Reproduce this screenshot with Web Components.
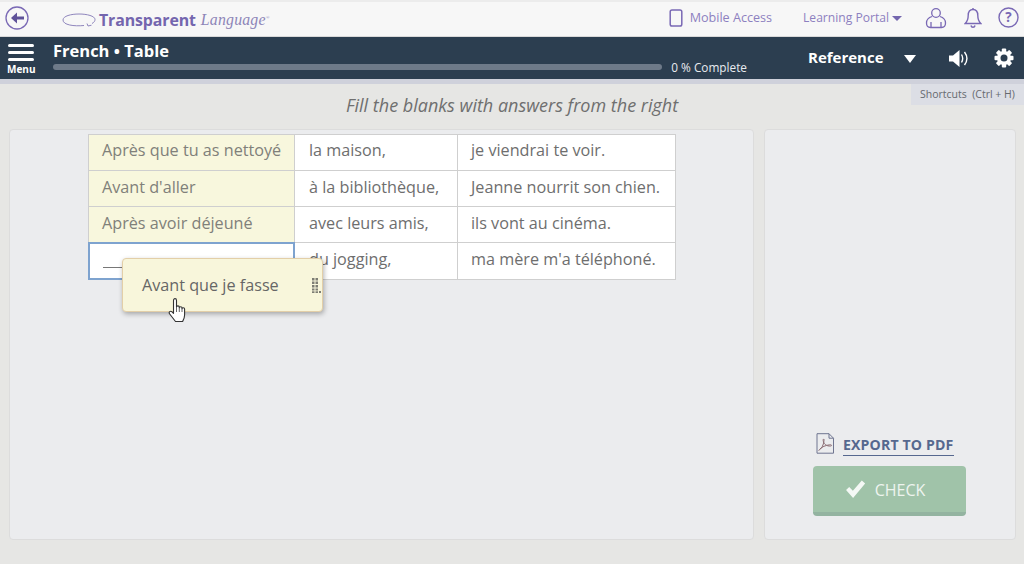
<!DOCTYPE html>
<html lang="fr"><head><meta charset="utf-8"><title>French Table</title>
<style>
html,body{margin:0;padding:0;height:564px;overflow:hidden}
body{background:#e6e6e4;font-family:"Open Sans",sans-serif;color:#6a6a6a;display:flex;flex-direction:column;position:relative}
</style></head><body>
<tl-topbar></tl-topbar>
<tl-navbar title="French • Table"></tl-navbar>
<tl-shortcuts>Shortcuts&nbsp; (Ctrl + H)</tl-shortcuts>
<tl-heading>Fill the blanks with answers from the right</tl-heading>
<tl-workspace>
  <tl-exercise slot="main">
    <tl-row first><tl-cell kind="answer">Après que tu as nettoyé</tl-cell><tl-cell>la maison,</tl-cell><tl-cell>je viendrai te voir.</tl-cell></tl-row>
    <tl-row><tl-cell kind="answer">Avant d'aller</tl-cell><tl-cell>à la bibliothèque,</tl-cell><tl-cell>Jeanne nourrit son chien.</tl-cell></tl-row>
    <tl-row><tl-cell kind="answer">Après avoir déjeuné</tl-cell><tl-cell>avec leurs amis,</tl-cell><tl-cell>ils vont au cinéma.</tl-cell></tl-row>
    <tl-row last><tl-cell kind="blank"></tl-cell><tl-cell>du jogging,</tl-cell><tl-cell>ma mère m'a téléphoné.</tl-cell></tl-row>
    <tl-drag-chip>Avant que je fasse</tl-drag-chip>
  </tl-exercise>
  <tl-actions slot="side"></tl-actions>
</tl-workspace>
<script>
function def(name,html,init){
  customElements.define(name,class extends HTMLElement{
    constructor(){super();const s=this.attachShadow({mode:'open'});s.innerHTML=typeof html==='function'?html(this):html;}
    connectedCallback(){if(init)init(this);}
  });
}
const P='#7a69b5';
def('tl-topbar',`<style>
:host{display:flex;align-items:center;box-sizing:border-box;height:37px;background:#f7f7f7;border-top:2px solid #ececec;border-bottom:1px solid #d9d9d9;padding-bottom:3px;font:12.1px "Open Sans",sans-serif;color:#8d80c0;flex:none}
svg{display:block;flex:none}
.logo{display:flex;align-items:center;margin:5px 0 0 33px}
.t{font:bold 15.900px "Open Sans",sans-serif;color:#7466ae;margin-left:3px;letter-spacing:-.1px}
.l{font:italic 15.800px "Liberation Serif",serif;color:#8d85b8;margin-left:5px;letter-spacing:.2px}
.r{margin-left:auto;display:flex;align-items:center}
sup{font-size:5px;line-height:0}
.tr{width:0;height:0;border:5px solid transparent;border-top:5px solid #7466ae;border-bottom:0;margin-left:3px;margin-top:2px}
</style>
<svg style="margin-left:5px" width="24" height="24" viewBox="0 0 24 24" fill="none"><circle cx="12" cy="12" r="11" stroke="${P}" stroke-width="1.300"/><path d="M19 12H10" stroke="#5f5299" stroke-width="3"/><path d="M12 6.500 6 12l6 5.500z" fill="#5f5299"/></svg>
<div class="logo"><svg width="34" height="16" viewBox="0 0 34 16" fill="none" stroke="#8f86bd" stroke-width="1"><path d="M22 13.500C12 14.500 1 13 1 8 1 4 9 2 17 2c8 0 16 2 16 5.500 0 1.500-1 3-3 4"/><path d="M25 11.500l1 2.500 3.500-.8"/></svg><span class="t">Transparent</span><span class="l">Language<sup>®</sup></span></div>
<div class="r">
<svg width="14" height="18" viewBox="0 0 14 18" fill="none" style="margin-right:7px"><rect x="1.200" y="1" width="11.600" height="16" rx="1.800" stroke="${P}" stroke-width="1.500"/></svg>
<span style="margin-right:31px;font-size:12.600px">Mobile Access</span>
<span>Learning Portal</span><i class="tr"></i>
<svg width="22" height="22" viewBox="0 0 22 22" fill="none" stroke="${P}" stroke-width="1.300" style="margin-left:23px"><circle cx="11" cy="6" r="4.300"/><path d="M7 9.500C3.500 10.500 1.500 12.500 1.500 16c0 3.500 1.500 4.500 4 4.500h11c2.500 0 4-1 4-4.500 0-3.500-2-5.500-5.500-6.500"/><path d="M6 15v5.500M16 15v5.500"/></svg>
<svg width="18" height="22" viewBox="0 0 18 22" fill="none" stroke="${P}" stroke-width="1.400" style="margin-left:17px"><path d="M9 2.500c-3 0-4.800 2.500-4.800 6 0 4-1 6-3 8h15.600c-2-2-3-4-3-8 0-3.500-1.800-6-4.800-6z"/><path d="M9 1v1.500"/><path d="M7 18.500c.3 1.200 1 1.800 2 1.800s1.700-.6 2-1.800" stroke-width="1.600"/></svg>
<svg width="21" height="21" viewBox="0 0 21 21" fill="none" style="margin:0 5px 0 16px"><circle cx="10.500" cy="10.500" r="9.500" stroke="${P}" stroke-width="1.400"/><text x="10.500" y="15.300" text-anchor="middle" font-family="Open Sans" font-weight="700" font-size="13.500" fill="${P}">?</text></svg>
</div>`);
def('tl-navbar',h=>`<style>
:host{display:flex;box-sizing:border-box;height:47px;flex:none;background:linear-gradient(#2c3e50 0,#2c3e50 42px,#cfd1db 42px);color:#fff;font-family:"Open Sans",sans-serif}
.menu{width:43px;box-sizing:border-box;padding:7px 0 0 8px;display:flex;flex-direction:column;align-items:flex-start}
.menu i{display:block;width:26px;height:3px;background:#fff;border-radius:2px;margin-bottom:4px}
.menu i:nth-child(3){margin-bottom:0}
.menu span{font:700 10px/10px "Open Sans",sans-serif;margin:3px 0 0 -1px}
.mid{width:10px}
.c{width:694px}
h1{margin:0;font:700 16.500px/21px "Open Sans",sans-serif;padding-top:3px}
.p{display:flex;align-items:center;position:relative;top:-1px}
.bar{width:610px;height:6px;border-radius:3px;background:#6e7a89}
.pc{font-size:11.800px;line-height:14px;margin-left:9px;color:#e8ebef;white-space:nowrap}
.ref{display:flex;align-items:flex-start;padding-top:10px;height:32px;margin-left:61px}
.ref b{font:700 15px/21px "Open Sans",sans-serif}
.tr{width:0;height:0;border:6px solid transparent;border-top:8px solid #fff;border-bottom:0;margin:8px 0 0 20px}
svg{display:block;flex:none}
</style>
<div class="menu"><i></i><i></i><i></i><span>Menu</span></div>
<div class="mid"></div>
<div class="c"><h1>${h.getAttribute('title')}</h1><div class="p"><div class="bar"></div><span class="pc">0 % Complete</span></div></div>
<div class="ref"><b>Reference</b><i class="tr"></i>
<svg width="20" height="19" viewBox="0 0 20 19" fill="none" style="margin:2px 0 0 33px"><path d="M0 6.500h4L10.500 1v17L4 12.500H0z" fill="#fff"/><path d="M12.500 5.500c1.500 2.500 1.500 5.500 0 8M15.500 3c3 4 3 9 0 13" stroke="#fff" stroke-width="1.400"/></svg>
<svg width="20" height="20" viewBox="0 0 20 20" style="margin:1px 0 0 25px"><g fill="#fff"><rect x="7.800" y=".500" width="4.400" height="19" rx="1"/><rect x="7.800" y=".500" width="4.400" height="19" rx="1" transform="rotate(45 10 10)"/><rect x="7.800" y=".500" width="4.400" height="19" rx="1" transform="rotate(90 10 10)"/><rect x="7.800" y=".500" width="4.400" height="19" rx="1" transform="rotate(135 10 10)"/></g><circle cx="10" cy="10" r="7" fill="#fff"/><circle cx="10" cy="10" r="3.500" fill="#2c3e50"/></svg>
</div>`);
def('tl-shortcuts',`<style>:host{position:absolute;left:911px;top:84px;width:113px;height:21px;background:#dcdee5;color:#66696f;font:10.500px/20px "Open Sans",sans-serif;text-align:left;padding-left:9px;box-sizing:border-box;white-space:nowrap}</style><slot></slot>`);
def('tl-heading',`<style>:host{display:block;flex:none;height:45px;box-sizing:border-box;padding-top:9px;text-align:center;font:italic 18px/24px "Open Sans",sans-serif;color:#6f6f6f}</style><slot></slot>`);
def('tl-workspace',`<style>:host{display:flex;gap:10px;padding:0 8px 0 9px;height:411px;flex:none}
::slotted([slot=main]){width:745px;flex:none}
::slotted([slot=side]){width:252px;flex:none}</style><slot name="main"></slot><slot name="side"></slot>`);
def('tl-exercise',`<style>:host{display:block;position:relative;box-sizing:border-box;background:#ebecee;border:1px solid #dcdcdc;border-radius:4px;padding:4px 0 0 78px}
.t{display:grid;width:588px;border:1px solid #cfcfcf;border-width:1px 1px 0 1px;box-sizing:border-box;background:#fff}</style><div class="t"><slot></slot></div>`);
def('tl-row',`<style>:host{display:grid;grid-template-columns:206px 163px 217px;height:36px;box-sizing:border-box;border-bottom:1px solid #cfcfcf;line-height:32px}
:host([first]){line-height:31px}
:host([last]){height:37px}</style><slot></slot>`);
def('tl-cell',`<style>:host{display:block;box-sizing:border-box;padding:0 0 0 14px;font-family:"Open Sans",sans-serif;font-size:16.200px;line-height:inherit;color:#6e6e6e;background:#fff;border-right:1px solid #cfcfcf;white-space:nowrap;position:relative}
:host(:last-of-type){border-right:0;padding-left:13px}
:host([kind=answer]){background:#f8f7dd;color:#80807a;padding-left:13px}
:host([kind=blank]){border:2px solid #7ea3cf;margin:-1px 0 -1px -1px;padding-left:13px}
.u{position:absolute;left:13px;top:23px;width:20px;height:1px;background:#777}</style><slot></slot>`,
el=>{if(el.getAttribute('kind')==='blank'){const u=document.createElement('div');u.className='u';el.shadowRoot.appendChild(u);}});
def('tl-drag-chip',`<style>:host{position:absolute;left:112px;top:128px;width:201px;height:54px;box-sizing:border-box;background:#f8f6db;border:1px solid #e3cfa8;border-radius:4px;box-shadow:1px 2px 5px rgba(0,0,0,.3);font:16.200px/52px "Open Sans",sans-serif;color:#666;padding-left:19px;white-space:nowrap}
.g{position:absolute;left:189px;top:19px}
.h{position:absolute;left:45px;top:38px}</style><slot></slot>
<svg class="g" width="10" height="16" viewBox="0 0 10 16"><g fill="#7d7d74"><rect x="0" y="0" width="2.500" height="15"/><rect x="3.500" y="0" width="2.500" height="15"/><rect x="7" y="13" width="2" height="2"/></g><g fill="#f8f6db"><rect y="2.500" width="6" height="1"/><rect y="6" width="6" height="1"/><rect y="9.500" width="6" height="1"/><rect y="12.500" width="6" height=".8"/></g></svg>
<svg class="h" width="20" height="26" viewBox="0 0 20 26"><path d="M5.500 3.500c0-2.500 3-2.500 3 0V10c0-1.500 2.800-1.500 2.800 0v.8c0-1.500 2.700-1.500 2.700 0v1c0-1.400 2.600-1.400 2.600.2V18c0 3-1.500 5.500-2 6.500H7.500L1.700 17c-1.500-2 .8-3.500 2.300-2.200l1.500 1.500z" fill="#fff" stroke="#333" stroke-width="1.100" stroke-linejoin="round"/><path d="M8.500 10v5M11.300 10.500v4.500M14 11.500V15" stroke="#555" stroke-width=".9" fill="none"/></svg>`);
def('tl-actions',`<style>:host{display:flex;flex-direction:column;align-items:flex-start;box-sizing:border-box;background:#ebecee;border:1px solid #dcdcdc;border-radius:4px;padding:303px 0 0 48px}
.e{display:flex;align-items:flex-start;margin-left:3px}
.e a{font:700 14.100px/18px "Open Sans",sans-serif;color:#56688f;border-bottom:1px solid #56688f;margin:3px 0 0 8px;letter-spacing:.15px;padding-bottom:1px;white-space:nowrap}
button{display:flex;align-items:center;justify-content:center;gap:9px;margin-top:10px;width:153px;height:50px;box-sizing:border-box;border:0;border-bottom:4px solid #93b3a0;border-radius:4px;background:#a0c3a9;color:#eef4ef;font:16px "Open Sans",sans-serif;padding:1px 9px 0 0}
svg{display:block}</style>
<div class="e"><svg width="19" height="21" viewBox="0 0 19 21" fill="none" stroke="#6f7590" stroke-width="1"><path d="M1 .700h12l4.500 4.500v15H1z"/><path d="M13 .700v4.500h4.500"/><path d="M2.500 17.500c3-1.500 5-5 5.500-10 .3-2-1-2-.8 0 .4 3 3 6 7.500 5.500 1.500-.2 1-1.500-1-1.200-4 .5-8 2-10 4.500" stroke="#8c6d74"/></svg><a>EXPORT TO PDF</a></div>
<button><svg width="21" height="19" viewBox="0 0 20 18"><path d="M1 9.500 4 6.500l3.500 3.700L16 .500l3.200 2.800L7.700 17z" fill="#f4f8f5"/></svg><span>CHECK</span></button>`);
</script>
</body></html>
